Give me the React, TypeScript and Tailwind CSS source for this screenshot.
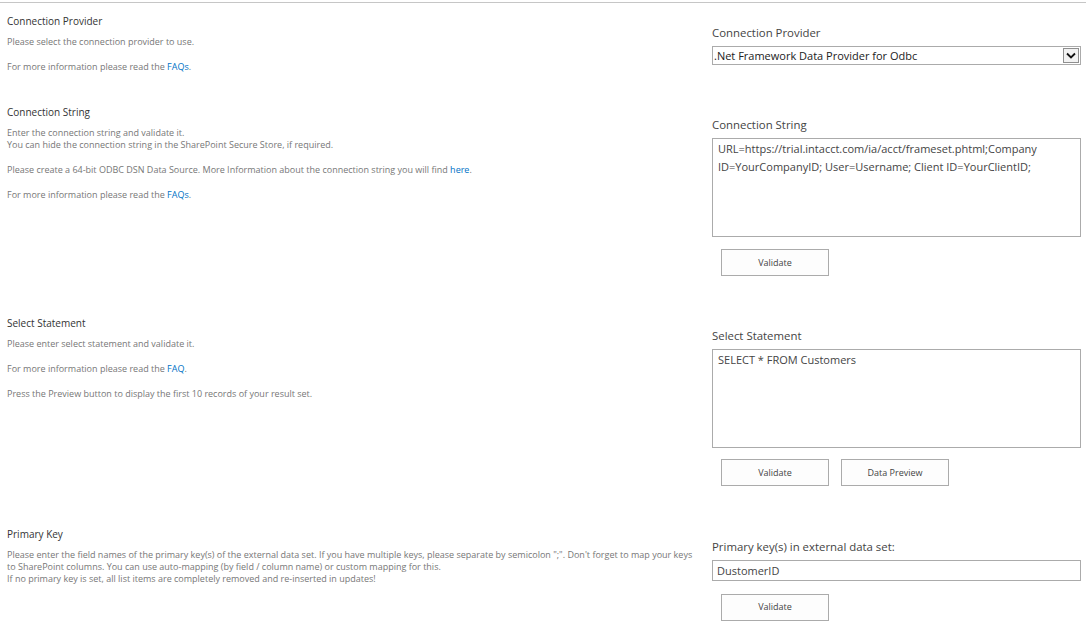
const font = { fontFamily: '"Open Sans", "Segoe UI", sans-serif' };

const Link = ({ children }: { children: React.ReactNode }) => (
  <a href="#" className="text-[#0072c6]">
    {children}
  </a>
);

const Button = ({ label }: { label: string }) => (
  <button className="w-[108px] h-[27px] border border-[#ababab] bg-[#fdfdfd] text-[9px] text-[#444]">
    {label}
  </button>
);

const Label = ({ children }: { children: React.ReactNode }) => (
  <div className="text-[11.4px] leading-[16px] text-[#444] mb-[5px]">{children}</div>
);

const Section = ({
  title,
  description,
  children,
  right = "pt-[23px] pb-[29px]",
}: {
  title: string;
  description: React.ReactNode;
  children: React.ReactNode;
  right?: string;
}) => (
  <div className="flex">
    <div className="w-[705px] pl-[7px] pr-[5px] pt-[10px]">
      <h3 className="text-[10px] leading-[16px] text-[#333] mb-[7px]">{title}</h3>
      <div className="text-[9px] leading-[12px] text-[#777] flex flex-col gap-[13px]">{description}</div>
    </div>
    <div className={`w-[376px] pl-[7px] ${right}`}>{children}</div>
  </div>
);

export default function App() {
  return (
    <div className="w-[1086px] h-[634px] bg-white overflow-hidden" style={font}>
      <div className="mt-[2px] border-t border-[#c6c6c6]" />

      <Section
        right="pt-[22px] pb-[29px]"
        title="Connection Provider"
        description={
          <>
            <p>Please select the connection provider to use.</p>
            <p>
              For more information please read the <Link>FAQs</Link>.
            </p>
          </>
        }
      >
        <Label>Connection Provider</Label>
        <div className="h-[19px] border border-[#ababab] flex items-center text-[11px] text-[#222]">
          <span className="flex-1 pl-[1px] leading-[16px]">.Net Framework Data Provider for Odbc</span>
          <span className="w-[16px] h-[15px] mr-[1px] border border-[#8f8f8f] bg-[#f2f2f2] flex items-center justify-center">
            <svg width="10" height="7" viewBox="0 0 10 7">
              <path d="M1 1.5 L5 5.5 L9 1.5" fill="none" stroke="#111" strokeWidth="1.8" />
            </svg>
          </span>
        </div>
      </Section>

      <Section
        title="Connection String"
        description={
          <>
            <p>
              Enter the connection string and validate it.
              <br />
              You can hide the connection string in the SharePoint Secure Store, if required.
            </p>
            <p>
              Please create a 64-bit ODBC DSN Data Source. More Information about the connection string you will
              find <Link>here</Link>.
            </p>
            <p>
              For more information please read the <Link>FAQs</Link>.
            </p>
          </>
        }
      >
        <Label>Connection String</Label>
        <div className="h-[99px] border border-[#ababab] px-[5px] py-[1px] text-[11px] leading-[18px] text-[#444]">
          URL=https://trial.intacct.com/ia/acct/frameset.phtml;Company ID=YourCompanyID; User=Username; Client
          ID=YourClientID;
        </div>
        <div className="mt-[11px] pl-[9px]">
          <Button label="Validate" />
        </div>
      </Section>

      <Section
        right="pt-[23px] pb-[30px]"
        title="Select Statement"
        description={
          <>
            <p>Please enter select statement and validate it.</p>
            <p>
              For more information please read the <Link>FAQ</Link>.
            </p>
            <p>Press the Preview button to display the first 10 records of your result set.</p>
          </>
        }
      >
        <Label>Select Statement</Label>
        <div className="h-[99px] border border-[#ababab] px-[5px] py-[1px] text-[11px] leading-[18px] text-[#444]">
          SELECT * FROM Customers
        </div>
        <div className="mt-[11px] pl-[9px] flex gap-[12px]">
          <Button label="Validate" />
          <Button label="Data Preview" />
        </div>
      </Section>

      <Section
        title="Primary Key"
        description={
          <>
            <p>
              Please enter the field names of the primary key(s) of the external data set. If you have multiple keys,
              please separate by semicolon ";". Don't forget to map your keys to SharePoint columns. You can use
              auto-mapping (by field / column name) or custom mapping for this.
              <br />
              If no primary key is set, all list items are completely removed and re-inserted in updates!
            </p>
          </>
        }
      >
        <Label>Primary key(s) in external data set:</Label>
        <div className="h-[21px] border border-[#ababab] px-[4px] flex items-center text-[11px] text-[#444]">
          DustomerID
        </div>
        <div className="mt-[11px] pl-[9px]">
          <Button label="Validate" />
        </div>
      </Section>
    </div>
  );
}
